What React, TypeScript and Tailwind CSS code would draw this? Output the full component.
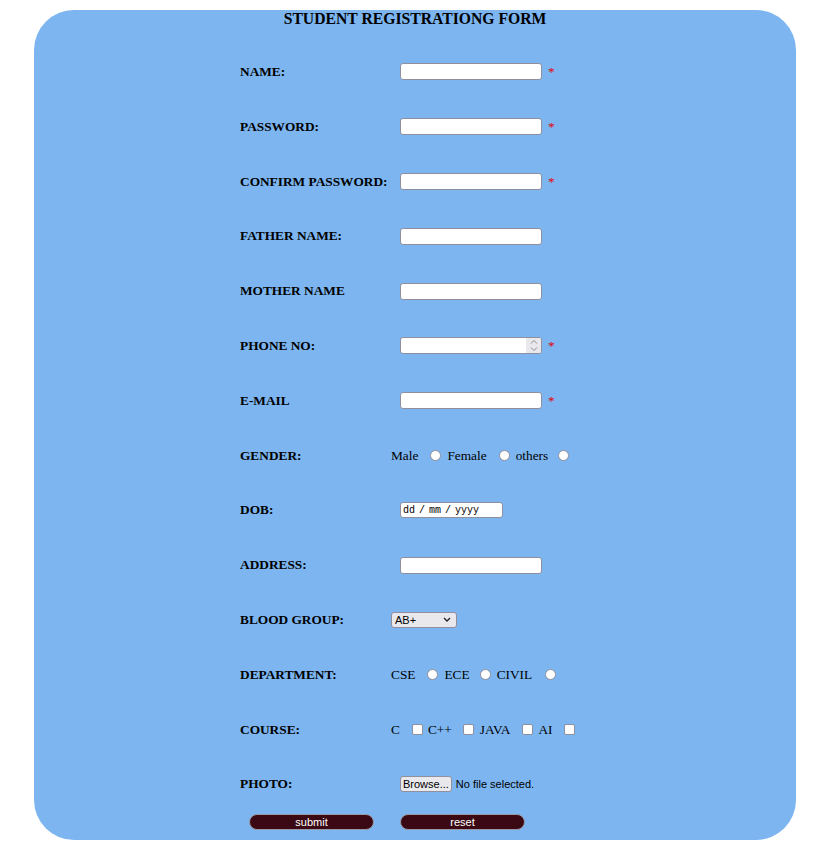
import { ReactNode } from "react";

const serif = { fontFamily: '"Liberation Serif", "Times New Roman", serif' };

function Star() {
  return <span className="ml-[6px] text-[13.33px] leading-none text-[#e00000]">*</span>;
}

function TextBox({ required }: { required?: boolean }) {
  return (
    <div className="flex items-center">
      <input
        type="text"
        className="ml-[9px] h-[17px] w-[142px] rounded-[3px] border border-[#8f8f9d] bg-white outline-none"
      />
      {required && <Star />}
    </div>
  );
}

function Radio({ name, className }: { name: string; className: string }) {
  return (
    <input
      type="radio"
      name={name}
      className={`h-[11px] w-[11px] appearance-none rounded-full border border-[#8f8f9d] bg-white ${className}`}
    />
  );
}

function Check({ className }: { className: string }) {
  return (
    <input
      type="checkbox"
      className={`h-[11px] w-[11px] appearance-none rounded-[2px] border border-[#8f8f9d] bg-white ${className}`}
    />
  );
}

function Row({ label, children }: { label: string; children: ReactNode }) {
  return (
    <div className="flex h-[54.8px] items-center">
      <div className="w-[151px] text-[13.33px] font-bold text-black">{label}</div>
      <div className="flex items-center text-[13.33px] text-black">{children}</div>
    </div>
  );
}

export default function App() {
  return (
    <div className="min-h-[860px] bg-white pt-[10px]" style={serif}>
      <div className="ml-[34px] h-[830px] w-[762px] rounded-[40px] bg-[#7cb5f0]">
        <h3 className="text-center text-[15.7px] font-bold leading-[18px] text-black">
          STUDENT REGISTRATIONG FORM
        </h3>

        <div className="ml-[206px] mt-[16.6px]">
          <Row label="NAME:">
            <TextBox required />
          </Row>
          <Row label="PASSWORD:">
            <TextBox required />
          </Row>
          <Row label="CONFIRM PASSWORD:">
            <TextBox required />
          </Row>
          <Row label="FATHER NAME:">
            <TextBox />
          </Row>
          <Row label="MOTHER NAME">
            <TextBox />
          </Row>
          <Row label="PHONE NO:">
            <div className="flex items-center">
              <div className="ml-[9px] flex h-[17px] w-[142px] justify-end overflow-hidden rounded-[3px] border border-[#8f8f9d] bg-white">
                <div className="flex w-[15px] flex-col items-center justify-center bg-[#e9e9ed]">
                  <svg width="8" height="13" viewBox="0 0 8 13" fill="none" stroke="#8a8a8a" strokeWidth="1">
                    <path d="M1 4.5 L4 1.5 L7 4.5" />
                    <path d="M1 8.5 L4 11.5 L7 8.5" />
                  </svg>
                </div>
              </div>
              <Star />
            </div>
          </Row>
          <Row label="E-MAIL">
            <TextBox required />
          </Row>
          <Row label="GENDER:">
            <span>Male</span>
            <Radio name="gender" className="ml-[12px] mr-[6px]" />
            <span>Female</span>
            <Radio name="gender" className="ml-[12px] mr-[6px]" />
            <span>others</span>
            <Radio name="gender" className="ml-[10px]" />
          </Row>
          <Row label="DOB:">
            <div
              className="ml-[9px] flex h-[16px] w-[103px] items-center gap-[4px] rounded-[3px] border border-[#8f8f9d] bg-white pl-[2px] text-[10px] text-black"
              style={{ fontFamily: '"Liberation Mono", "Courier New", monospace' }}
            >
              <span>dd</span>
              <span>/</span>
              <span>mm</span>
              <span>/</span>
              <span>yyyy</span>
            </div>
          </Row>
          <Row label="ADDRESS:">
            <TextBox />
          </Row>
          <Row label="BLOOD GROUP:">
            <div
              className="flex h-[16px] w-[66px] items-center justify-between rounded-[3px] border border-[#8f8f9d] bg-[#e9e9ed] pl-[3px] pr-[5px] text-[11px] text-black"
              style={{ fontFamily: '"Liberation Sans", Arial, sans-serif' }}
            >
              <span>AB+</span>
              <svg width="8" height="5" viewBox="0 0 8 5" fill="none" stroke="#222" strokeWidth="1.3">
                <path d="M1 1 L4 4 L7 1" />
              </svg>
            </div>
          </Row>
          <Row label="DEPARTMENT:">
            <span>CSE</span>
            <Radio name="dept" className="ml-[12px] mr-[6px]" />
            <span>ECE</span>
            <Radio name="dept" className="ml-[10px] mr-[6px]" />
            <span>CIVIL</span>
            <Radio name="dept" className="ml-[13px]" />
          </Row>
          <Row label="COURSE:">
            <span>C</span>
            <Check className="ml-[12px] mr-[5px]" />
            <span>C++</span>
            <Check className="ml-[11px] mr-[6px]" />
            <span>JAVA</span>
            <Check className="ml-[12px] mr-[5px]" />
            <span>AI</span>
            <Check className="ml-[11px]" />
          </Row>
          <Row label="PHOTO:">
            <div
              className="ml-[9px] flex items-center text-[11px] text-black"
              style={{ fontFamily: '"Liberation Sans", Arial, sans-serif' }}
            >
              <span className="rounded-[3px] border border-[#8f8f9d] bg-[#e9e9ed] px-[2px] leading-[14px]">
                Browse...
              </span>
              <span className="ml-[4px]">No file selected.</span>
            </div>
          </Row>
        </div>

        <div
          className="ml-[215px] mt-[2px] flex gap-[26px] text-[11px] text-white"
          style={{ fontFamily: '"Liberation Sans", Arial, sans-serif' }}
        >
          <button className="h-[16px] w-[125px] rounded-full border border-[#9a9aa6] bg-[#3a0913] leading-[14px]">
            submit
          </button>
          <button className="h-[16px] w-[125px] rounded-full border border-[#9a9aa6] bg-[#3a0913] leading-[14px]">
            reset
          </button>
        </div>
      </div>
    </div>
  );
}
